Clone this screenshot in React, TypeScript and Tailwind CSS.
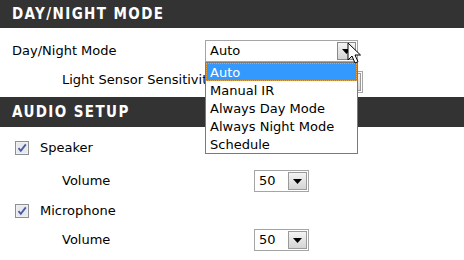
import React from 'react';

function Arrow() {
    return (
        <svg width="9" height="5" viewBox="0 0 9 5"><path d="M0 0h9L4.5 5z" fill="#000"/></svg>
    )
}

function SelectBox({value, width, pressed}: { value: string, width: string, pressed?: boolean }) {
    return (
        <div className={`flex h-[22px] items-stretch border border-[#a5a5a5] bg-white ${width}`}>
            <span className="flex-1 pl-[4px] leading-[20px] text-black">{value}</span>
            <span
                className={`m-[1px] flex w-[19px] items-center justify-center border ${pressed ? 'border-[#8a8a8a]' : 'border-[#9a9a9a]'} bg-gradient-to-b from-[#f4f4f4] to-[#d4d4d4]`}>
                <Arrow/>
            </span>
        </div>
    )
}

function Check() {
    return (
        <svg width="14" height="14" viewBox="0 0 14 14">
            <rect x="0.5" y="0.5" width="13" height="13" fill="#f0f0f0" stroke="#8e8f8f"/>
            <rect x="2" y="2" width="10" height="10" fill="#e6e9ef"/>
            <path d="M3.5 7.2l2.3 2.6L10.8 3.4" fill="none" stroke="#4b5aa0" strokeWidth="1.8"/>
        </svg>
    )
}

function Header({title, h}: { title: string, h: string }) {
    return (
        <div className={`flex w-full items-center bg-[#333333] pl-[12px] text-[15px] font-bold tracking-[1.4px] text-white ${h}`}
             style={{fontFamily: '"DejaVu Sans Condensed", "Liberation Sans", sans-serif'}}>
            {title}
        </div>
    )
}

export default function App() {
    const options = ['Auto', 'Manual IR', 'Always Day Mode', 'Always Night Mode', 'Schedule'];
    return (
        <div className="relative h-[260px] w-[464px] overflow-hidden bg-white text-[13px] text-black"
             style={{fontFamily: '"DejaVu Sans", Tahoma, sans-serif'}}>
            <Header title="DAY/NIGHT MODE" h="h-[28px]"/>
            <div className="flex flex-col">
                <div className="mt-[12px] flex h-[22px] items-center">
                    <span className="w-[205px] pl-[12px]">Day/Night Mode</span>
                    <SelectBox value="Auto" width="w-[153px]" pressed/>
                </div>
                <div className="flex h-[35px] items-center">
                    <span className="w-[205px] pl-[62px] whitespace-nowrap">Light Sensor Sensitivity</span>
                    <div className="mt-[4px]"><SelectBox value="" width="w-[158px]"/></div>
                </div>
            </div>
            <Header title="AUDIO SETUP" h="h-[30px]"/>
            <div className="flex flex-col">
                <div className="mt-[7px] flex h-[28px] items-center gap-[11px] pl-[15px]">
                    <Check/><span>Speaker</span>
                </div>
                <div className="flex h-[38px] items-center">
                    <span className="w-[254px] pl-[62px]">Volume</span>
                    <SelectBox value="50" width="w-[55px]"/>
                </div>
                <div className="flex h-[22px] items-center gap-[11px] pl-[15px]">
                    <Check/><span>Microphone</span>
                </div>
                <div className="flex h-[36px] items-center">
                    <span className="w-[254px] pl-[62px]">Volume</span>
                    <SelectBox value="50" width="w-[55px]"/>
                </div>
            </div>

            {/* open dropdown list */}
            <div className="absolute left-[205px] top-[62px] w-[153px] border border-[#7a7a7a] bg-white">
                {options.map((o, i) => (
                    <div key={o}
                         className={`h-[18px] pl-[3px] leading-[17px] ${i === 0 ? 'border border-dotted border-[#e8a040] bg-[#3399ff] text-white' : 'border border-transparent'}`}>
                        {o}
                    </div>
                ))}
            </div>

            {/* mouse cursor */}
            <svg className="absolute left-[347px] top-[42px]" width="14" height="23" viewBox="0 0 14 23">
                <path d="M1 1v17l4-4 3 7 3-1.3-3-6.7h5.5z" fill="#fff" stroke="#000" strokeWidth="1"
                      strokeLinejoin="round"/>
            </svg>
        </div>
    )
}
